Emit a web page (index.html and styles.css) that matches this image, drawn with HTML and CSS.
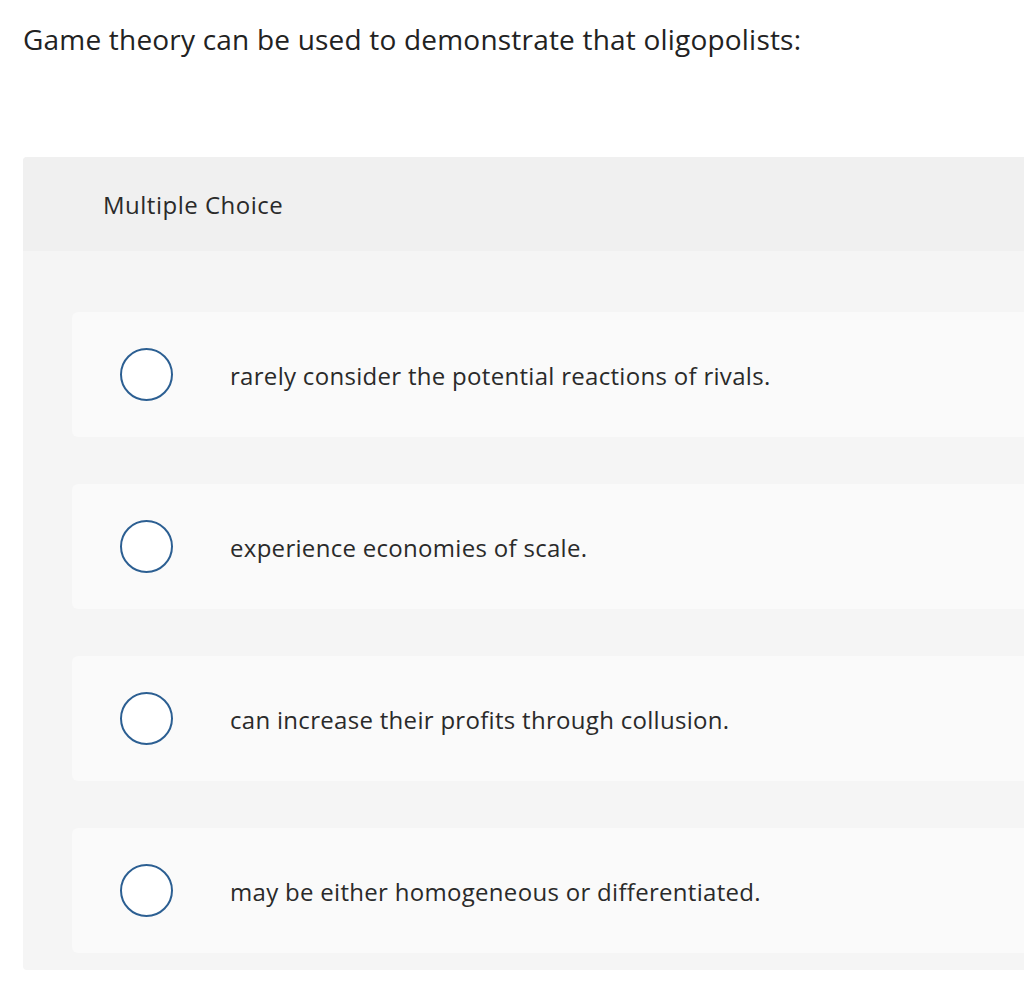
FILE: index.html
```html
<!DOCTYPE html>
<html>
<head>
<meta charset="utf-8">
<link rel="stylesheet" href="styles.css">
</head>
<body>
<div class="page">
  <h1 class="question">Game theory can be used to demonstrate that oligopolists:</h1>
  <div class="panel">
    <div class="panel-head">Multiple Choice</div>
    <div class="panel-body">
      <div class="option"><span class="radio"></span><span class="label">rarely consider the potential reactions of rivals.</span></div>
      <div class="option"><span class="radio"></span><span class="label">experience economies of scale.</span></div>
      <div class="option"><span class="radio"></span><span class="label">can increase their profits through collusion.</span></div>
      <div class="option"><span class="radio"></span><span class="label">may be either homogeneous or differentiated.</span></div>
    </div>
  </div>
</div>
</body>
</html>
```
FILE: styles.css
```css
html, body {
  margin: 0;
  padding: 0;
  background: #ffffff;
  overflow: hidden;
}
body {
  font-family: "Open Sans", Lato, "Liberation Sans", sans-serif;
  color: #222;
}
.page {
  padding: 0 0 0 23px;
  width: 1100px;
}
.question {
  margin: 0;
  padding-top: 20px;
  height: 157px;
  box-sizing: border-box;
  font-size: 28px;
  font-weight: 400;
  letter-spacing: 0.2px;
  line-height: 38px;
  color: #222;
}
.panel {
  background: #f5f5f5;
  border-radius: 4px 0 0 4px;
  overflow: hidden;
  padding-bottom: 17px;
}
.panel-head {
  background: #f0f0f0;
  height: 94px;
  padding-left: 80px;
  display: flex;
  align-items: center;
  font-size: 24px;
  letter-spacing: 0.5px;
  color: #2a2a2a;
}
.panel-body {
  padding: 61px 0 0 49px;
  display: flex;
  flex-direction: column;
  gap: 47px;
}
.option {
  background: #fafafa;
  border-radius: 6px 0 0 6px;
  height: 125px;
  display: flex;
  align-items: center;
  padding-left: 48px;
}
.radio {
  width: 49px;
  height: 49px;
  border: 2px solid #2c5f92;
  border-radius: 50%;
  background: #fff;
  flex: none;
}
.label {
  margin-left: 57px;
  font-size: 24px;
  letter-spacing: 0.3px;
  color: #2a2a2a;
  padding-top: 2px;
}
```
